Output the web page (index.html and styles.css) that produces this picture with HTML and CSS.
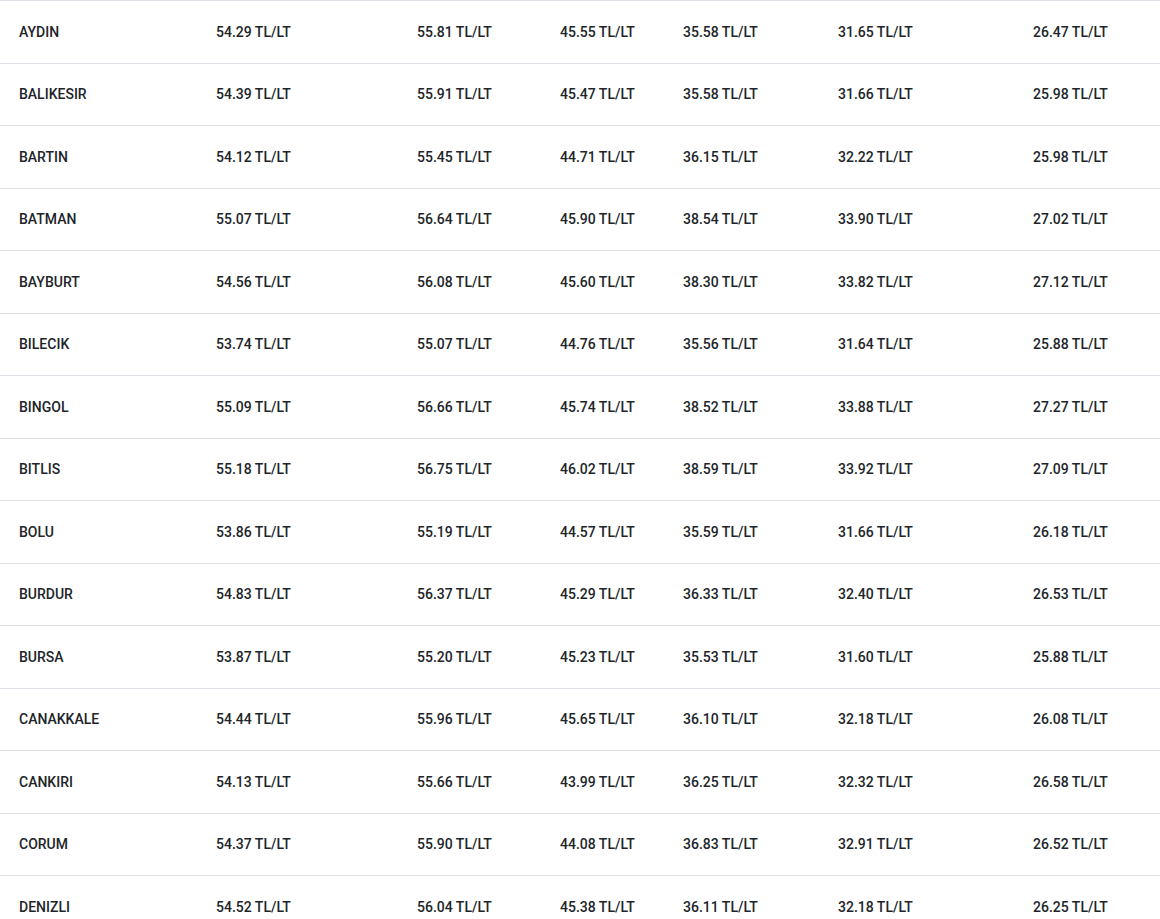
FILE: index.html
```html
<!DOCTYPE html>
<html lang="tr">
<head>
  <meta charset="UTF-8" />
  <meta name="viewport" content="width=device-width, initial-scale=1.0"/>
  <title>Akaryakıt Fiyatları</title>
  <link rel="stylesheet" href="styles.css">
</head>
<body>
  <table class="prices">
    <colgroup>
      <col class="c-city">
      <col class="c-1">
      <col class="c-2">
      <col class="c-3">
      <col class="c-4">
      <col class="c-5">
      <col class="c-6">
    </colgroup>
    <tbody>
      <tr><td>AYDIN</td><td>54.29 TL/LT</td><td>55.81 TL/LT</td><td>45.55 TL/LT</td><td>35.58 TL/LT</td><td>31.65 TL/LT</td><td>26.47 TL/LT</td></tr>
      <tr><td>BALIKESIR</td><td>54.39 TL/LT</td><td>55.91 TL/LT</td><td>45.47 TL/LT</td><td>35.58 TL/LT</td><td>31.66 TL/LT</td><td>25.98 TL/LT</td></tr>
      <tr><td>BARTIN</td><td>54.12 TL/LT</td><td>55.45 TL/LT</td><td>44.71 TL/LT</td><td>36.15 TL/LT</td><td>32.22 TL/LT</td><td>25.98 TL/LT</td></tr>
      <tr><td>BATMAN</td><td>55.07 TL/LT</td><td>56.64 TL/LT</td><td>45.90 TL/LT</td><td>38.54 TL/LT</td><td>33.90 TL/LT</td><td>27.02 TL/LT</td></tr>
      <tr><td>BAYBURT</td><td>54.56 TL/LT</td><td>56.08 TL/LT</td><td>45.60 TL/LT</td><td>38.30 TL/LT</td><td>33.82 TL/LT</td><td>27.12 TL/LT</td></tr>
      <tr><td>BILECIK</td><td>53.74 TL/LT</td><td>55.07 TL/LT</td><td>44.76 TL/LT</td><td>35.56 TL/LT</td><td>31.64 TL/LT</td><td>25.88 TL/LT</td></tr>
      <tr><td>BINGOL</td><td>55.09 TL/LT</td><td>56.66 TL/LT</td><td>45.74 TL/LT</td><td>38.52 TL/LT</td><td>33.88 TL/LT</td><td>27.27 TL/LT</td></tr>
      <tr><td>BITLIS</td><td>55.18 TL/LT</td><td>56.75 TL/LT</td><td>46.02 TL/LT</td><td>38.59 TL/LT</td><td>33.92 TL/LT</td><td>27.09 TL/LT</td></tr>
      <tr><td>BOLU</td><td>53.86 TL/LT</td><td>55.19 TL/LT</td><td>44.57 TL/LT</td><td>35.59 TL/LT</td><td>31.66 TL/LT</td><td>26.18 TL/LT</td></tr>
      <tr><td>BURDUR</td><td>54.83 TL/LT</td><td>56.37 TL/LT</td><td>45.29 TL/LT</td><td>36.33 TL/LT</td><td>32.40 TL/LT</td><td>26.53 TL/LT</td></tr>
      <tr><td>BURSA</td><td>53.87 TL/LT</td><td>55.20 TL/LT</td><td>45.23 TL/LT</td><td>35.53 TL/LT</td><td>31.60 TL/LT</td><td>25.88 TL/LT</td></tr>
      <tr><td>CANAKKALE</td><td>54.44 TL/LT</td><td>55.96 TL/LT</td><td>45.65 TL/LT</td><td>36.10 TL/LT</td><td>32.18 TL/LT</td><td>26.08 TL/LT</td></tr>
      <tr><td>CANKIRI</td><td>54.13 TL/LT</td><td>55.66 TL/LT</td><td>43.99 TL/LT</td><td>36.25 TL/LT</td><td>32.32 TL/LT</td><td>26.58 TL/LT</td></tr>
      <tr><td>CORUM</td><td>54.37 TL/LT</td><td>55.90 TL/LT</td><td>44.08 TL/LT</td><td>36.83 TL/LT</td><td>32.91 TL/LT</td><td>26.52 TL/LT</td></tr>
      <tr><td>DENIZLI</td><td>54.52 TL/LT</td><td>56.04 TL/LT</td><td>45.38 TL/LT</td><td>36.11 TL/LT</td><td>32.18 TL/LT</td><td>26.25 TL/LT</td></tr>
    </tbody>
  </table>
</body>
</html>
```
FILE: styles.css
```css
* { margin: 0; padding: 0; box-sizing: border-box; }

body {
  background: #fff;
  color: #212529;
  font-family: Roboto, "Liberation Sans", sans-serif;
  font-size: 14px;
  font-weight: 500;
  overflow: hidden;
}

.prices {
  width: 100%;
  table-layout: fixed;
  border-collapse: collapse;
}

/* column widths, taken from where each value starts */
.c-city { width: 216px; }
.c-1 { width: 201px; }
.c-2 { width: 143px; }
.c-3 { width: 123px; }
.c-4 { width: 155px; }
.c-5 { width: 195px; }

.prices td {
  height: 62.5px;
  line-height: 21px;
  padding: 1px 0 0;
  border-top: 1px solid #dee2e6;
  vertical-align: middle;
  white-space: nowrap;
}

.prices td:first-child {
  padding-left: 19px;
}
```
